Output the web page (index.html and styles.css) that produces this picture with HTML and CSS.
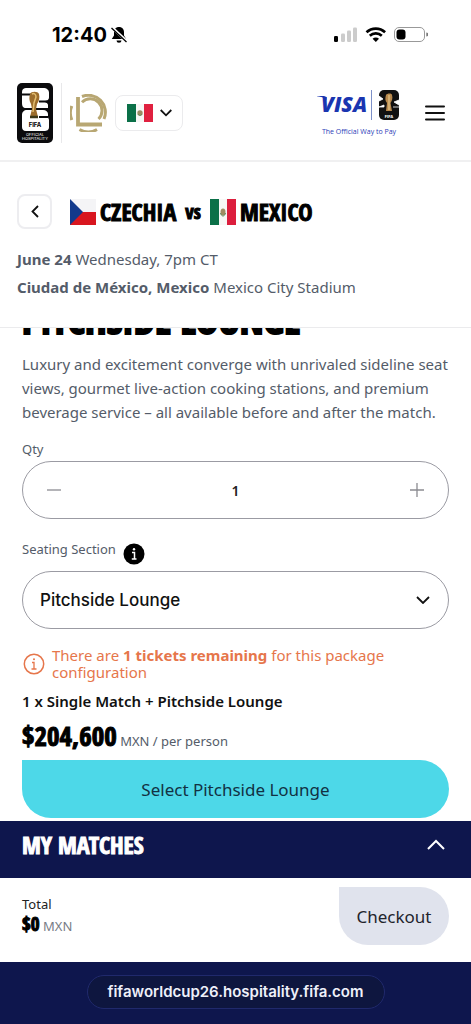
FILE: index.html
```
<!DOCTYPE html>
<html lang="en">
<head>
  <meta charset="UTF-8">
  <meta name="viewport" content="width=device-width, initial-scale=1.0">
  <title>Pitchside Lounge - Official Hospitality</title>
  <link rel="stylesheet" href="styles.css">
</head>
<body>
  <div class="status-bar">
    <div class="status-time">
      <span>12:40</span>
      <svg width="18" height="18" viewBox="0 0 18 18">
        <path d="M9 1c-3.200 0-5 2.200-5 5v3.500L1.800 13h14.400L14 9.500V6c0-2.800-1.800-5-5-5zM6.500 14.500a2.500 2.300 0 0 0 5 0z" fill="#000"/>
        <path d="M2 1.500l15 14" stroke="#fff" stroke-width="3"/>
        <path d="M1.500 2l15 14" stroke="#000" stroke-width="1.300"/>
      </svg>
    </div>
    <svg width="94" height="18" viewBox="0 0 94 18">
      <rect x="0" y="10" width="4" height="6" rx="1.300" fill="#000"/>
      <g fill="#ccc">
        <rect x="7" y="7.500" width="4" height="8.500" rx="1.300"/>
        <rect x="13" y="4.500" width="4" height="11.500" rx="1.300"/>
        <rect x="19" y="1.500" width="4" height="14.500" rx="1.300"/>
      </g>
      <g fill="none" stroke="#000" stroke-width="2.600">
        <path d="M32.500 6.300a13.500 13.500 0 0 1 18.600 0"/>
        <path d="M35.800 9.800a8.700 8.700 0 0 1 12 0"/>
      </g>
      <path d="M41.800 16l-3.200-3.200a4.600 4.600 0 0 1 6.400 0z" fill="#000"/>
      <rect x="60.500" y="1.500" width="30" height="14" rx="4.500" fill="none" stroke="#999"/>
      <rect x="62.500" y="3.500" width="9" height="10" rx="3" fill="#000"/>
      <path d="M92.300 6.500v4a2 2 0 0 0 0-4z" fill="#777"/>
    </svg>
  </div>

  <header class="nav">
    <a href="#" class="nav-logos" aria-label="Official Hospitality">
      <svg width="36" height="60" viewBox="0 0 36 60">
        <rect width="36" height="60" rx="5" fill="#0b0b0d"/>
        <path d="M5 9c0-3 2-4 4-4h17c4 0 6 2 6 5v4c0 3-2 4-5 4H5z" fill="#fff"/>
        <path d="M5 20V16c0-2 1-3 4-3h17v5c2 1 5 2 5 4v3H9c-3 0-4-2-4-5z" fill="#fff"/>
        <path d="M5 32c0-3 2-5 5-5h16c3 0 5 2 5 4v3c0 1 1 2 1 3v7c0 3-2 4-5 4H9c-3 0-4-2-4-4z" fill="#fff"/>
        <path d="M5 11.500h9M22 18.500h10M22 34h9M5 26h26" stroke="#0b0b0d" stroke-width="2"/>
        <path d="M13 11c1-3 8-3 9 0 1 4 0 7-2 10l-1 5 2 8h-8l2-8-1-5c-2-3-2-7-1-10z" fill="#9c6d2c"/>
        <path d="M15 11c2-1 4 0 4 3l-2 6-1 9" fill="none" stroke="#e2bd70" stroke-width="1.500"/>
        <path d="M13 34h8" stroke="#3d3818" stroke-width="2.500"/>
        <text x="18" y="44" class="logo-fifa" text-anchor="middle">FIFA</text>
        <text x="18" y="53" class="logo-small" text-anchor="middle">OFFICIAL</text>
        <text x="18" y="57" class="logo-small" text-anchor="middle">HOSPITALITY</text>
      </svg>
      <span class="logo-divider"></span>
      <svg width="37" height="38" viewBox="0 0 37 38" fill="none" stroke="#b8a773" stroke-width="3">
        <path d="M8 3v27.500h24" stroke-width="3.800"/>
        <path d="M1.800 12a18 18 0 0 0 0 14"/>
        <path d="M12 2.500A17 17 0 0 1 34 25"/>
        <path d="M12 8.200A11.300 11.300 0 0 1 28.500 25"/>
        <path d="M9.500 35.500a18 18 0 0 0 17.500 0"/>
      </svg>
    </a>
    <button type="button" class="btn-country" aria-label="Country: Mexico">
      <svg width="26" height="18" viewBox="0 0 26 18">
        <rect width="26" height="18" fill="#f7f7f5"/>
        <rect width="9" height="18" fill="#0b7048"/>
        <rect x="17" width="9" height="18" fill="#e0203f"/>
        <circle cx="13" cy="9" r="2.700" fill="#9c8b63"/>
        <path d="M11 10c1 2 3 2 4 0" fill="none" stroke="#5e8b5c"/>
      </svg>
      <svg width="12" height="8" viewBox="0 0 12 8" fill="none" stroke="#111" stroke-width="1.800"><path d="M.7 1L6 6.300 11.300 1"/></svg>
    </button>
    <a href="#" class="sponsor" aria-label="Visa">
      <svg width="84" height="32" viewBox="0 0 84 32">
        <path d="M0 7h7l2.500 1v3C7 8.500 4 7.700 0 7.300z" fill="#1a35b0"/>
        <text x="4" y="22.500" class="visa-text">VISA</text>
        <path d="M54.500 1v30" stroke="#7d90c8"/>
        <rect x="62" y="1" width="20" height="30" rx="5" fill="#111"/>
        <path d="M62 7l4 3-4 2zM82 11l-5 2 5 3M62 18h5v-2zM82 18h-6" fill="#fff" stroke="#fff" stroke-width=".8"/>
        <path d="M69 6c1-2 6-2 6 0 1 3 0 6-1.500 8l1.500 8h-6l1-8c-2-2-2-5-1-8z" fill="#b8894d"/>
        <path d="M72 6v15" stroke="#ead095"/>
        <text x="72" y="28.500" class="mini-fifa" text-anchor="middle">FIFA</text>
      </svg>
      <span>The Official Way to Pay</span>
    </a>
    <button type="button" class="btn-menu" aria-label="Menu">
      <svg width="20" height="16" viewBox="0 0 20 16" stroke="#111" stroke-width="2" stroke-linecap="round"><path d="M1 1.500h18M1 8h18M1 14.500h18"/></svg>
    </button>
  </header>

  <section class="match">
    <div class="match-row">
      <button type="button" class="btn-back" aria-label="Back">
        <svg width="8" height="13" viewBox="0 0 8 13" fill="none" stroke="#111" stroke-width="1.800"><path d="M7 1L1.500 6.500 7 12"/></svg>
      </button>
      <h1 class="teams">
        <svg width="26" height="26" viewBox="0 0 26 26">
          <rect width="26" height="13" fill="#f4f4f6"/>
          <rect y="13" width="26" height="13" fill="#d8161f"/>
          <path d="M0 0l13 13L0 26z" fill="#12398b"/>
        </svg>
        <span>CZECHIA</span>
        <span class="versus">vs</span>
        <svg width="26" height="26" viewBox="0 0 26 26">
          <rect width="26" height="26" fill="#f7f7f5"/>
          <rect width="9" height="26" fill="#0b7048"/>
          <rect x="17" width="9" height="26" fill="#dc1e3d"/>
          <ellipse cx="13" cy="13" rx="2.500" ry="3.500" fill="#a08c62"/>
          <path d="M10.500 14c1 4 4 4 5 0" fill="none" stroke="#5e8b5c"/>
        </svg>
        <span>MEXICO</span>
      </h1>
    </div>
    <p><b>June 24</b> Wednesday, 7pm CT</p>
    <p><b>Ciudad de México, Mexico</b> Mexico City Stadium</p>
  </section>

  <main class="package">
    <h2>PITCHSIDE LOUNGE</h2>
    <p class="description">Luxury and excitement converge with unrivaled sideline seat views, gourmet live-action cooking stations, and premium beverage service – all available before and after the match.</p>

    <label for="qty" class="field-label">Qty</label>
    <div class="field">
      <button type="button" class="btn-step" aria-label="Decrease">
        <svg width="14" height="14" viewBox="0 0 14 14" stroke="#8c8c91" stroke-width="1.300"><path d="M0 7h14"/></svg>
      </button>
      <input type="text" id="qty" name="qty" value="1" inputmode="numeric">
      <button type="button" class="btn-step" aria-label="Increase">
        <svg width="14" height="14" viewBox="0 0 14 14" stroke="#8c8c91" stroke-width="1.300"><path d="M0 7h14M7 0v14"/></svg>
      </button>
    </div>

    <div class="seating-label">
      <label for="section" class="field-label">Seating Section</label>
      <button type="button" class="btn-info" aria-label="About seating sections">
        <svg width="22" height="22" viewBox="0 0 22 22">
          <circle cx="11" cy="11" r="10.500" fill="#000"/>
          <path d="M9 9.500h2.500V16M8.800 16h4.700" fill="none" stroke="#fff" stroke-width="1.500"/>
          <circle cx="11" cy="6.300" r="1.200" fill="#fff"/>
        </svg>
      </button>
    </div>
    <div class="field">
      <select id="section" name="section">
        <option>Pitchside Lounge</option>
      </select>
      <svg class="select-arrow" width="14" height="8" viewBox="0 0 14 8" fill="none" stroke="#111" stroke-width="1.800"><path d="M1 1l6 6 6-6"/></svg>
    </div>

    <div class="notice">
      <svg width="22" height="22" viewBox="0 0 22 22" fill="none" stroke="#e6764b" stroke-width="1.500">
        <circle cx="11" cy="11" r="9.700"/>
        <path d="M9 9.500h2V16M8.500 16h5" stroke-width="1.300"/>
        <circle cx="11" cy="6.300" r="1" fill="#e6764b" stroke="none"/>
      </svg>
      <p>There are <b>1 tickets remaining</b> for this package configuration</p>
    </div>

    <p class="summary">1 x Single Match + Pitchside Lounge</p>
    <p class="price"><strong>$204,600</strong> MXN / per person</p>
    <button type="button" class="btn-select">Select Pitchside Lounge</button>
  </main>

  <section class="matches">
    <h2>MY MATCHES</h2>
    <button type="button" class="btn-expand" aria-label="Show my matches">
      <svg width="18" height="11" viewBox="0 0 18 11" fill="none" stroke="#fff" stroke-width="2"><path d="M1 10l8-8 8 8"/></svg>
    </button>
  </section>

  <section class="checkout">
    <div>
      <div class="total-label">Total</div>
      <div class="total-value"><strong>$0</strong> MXN</div>
    </div>
    <button type="button" class="btn-checkout">Checkout</button>
  </section>

  <footer class="browser-bar">
    <div class="address">fifaworldcup26.hospitality.fifa.com</div>
  </footer>
</body>
</html>
```
FILE: styles.css
```
/* Basic */
* {
  box-sizing: border-box;
}
body {
  font-family: "Noto Sans", sans-serif;
  font-size: 15px;
  color: #545c69;
  background: #fff;
  margin: 0;
  min-height: 100vh;
  display: flex;
  flex-direction: column;
}
h1, h2, p {
  margin: 0;
}
button {
  font-family: inherit;
  padding: 0;
  border: none;
  background: none;
  cursor: pointer;
}
svg {
  display: block;
  flex: none;
}

/* Display type */
.teams,
.package h2,
.price strong,
.matches h2,
.total-value strong {
  font-family: "Open Sans Condensed", "Roboto Condensed", sans-serif;
  font-weight: 700;
  -webkit-text-stroke: 1px currentColor;
}

/* Status bar */
.status-bar {
  height: 70px;
  padding: 0 43px 0 52px;
  display: flex;
  align-items: center;
  justify-content: space-between;
}
.status-time {
  display: flex;
  align-items: center;
  gap: 3px;
  font-family: Inter, sans-serif;
  font-size: 20px;
  font-weight: 700;
  color: #000;
}

/* Navigation */
.nav {
  height: 92px;
  padding: 0 26px 4px 17px;
  border-bottom: 2px solid #f0f0f1;
  display: flex;
  align-items: center;
}
.nav-logos {
  display: flex;
  align-items: center;
  gap: 8px;
}
.logo-divider {
  width: 1px;
  height: 60px;
  background: #e8e8ea;
}
.logo-fifa {
  font: 700 6px Inter, sans-serif;
  fill: #000;
}
.logo-small {
  font: 400 4px Inter, sans-serif;
  fill: #fff;
}
.btn-country {
  width: 68px;
  height: 36px;
  margin-left: 8px;
  border: 1px solid #ebebed;
  border-radius: 8px;
  display: flex;
  align-items: center;
  justify-content: center;
  gap: 7px;
}
.sponsor {
  margin-left: auto;
  display: flex;
  flex-direction: column;
  align-items: center;
  gap: 6px;
  font-family: "Open Sans", sans-serif;
  font-size: 7px;
  line-height: 10px;
  color: #2b40b8;
  text-decoration: none;
}
.visa-text {
  font: italic 800 21px "Open Sans", sans-serif;
  fill: #1a35b0;
}
.mini-fifa {
  font: 700 4px Inter, sans-serif;
  fill: #fff;
}
.btn-menu {
  margin-left: 24px;
}

/* Match */
.match {
  position: relative;
  z-index: 1;
  padding: 32px 17px 26px;
  background: #fff;
  border-bottom: 1px solid #ebebed;
}
.match-row {
  display: flex;
  align-items: center;
  gap: 18px;
  margin-bottom: 16px;
}
.btn-back {
  width: 35px;
  height: 35px;
  border: 2px solid #ededf0;
  border-radius: 8px;
  display: flex;
  align-items: center;
  justify-content: center;
}
.teams {
  display: flex;
  align-items: center;
  gap: 4px;
  font-size: 24px;
  line-height: 34px;
  color: #000;
}
.versus {
  margin: 0 5px;
  font-size: 19px;
}
.match p {
  line-height: 28px;
}

/* Package */
.package {
  padding: 0 22px 3px;
}
.package h2 {
  margin-top: -30px;
  font-size: 38px;
  line-height: 42px;
  color: #000;
  white-space: nowrap;
  -webkit-text-stroke-width: 2px;
}
.description {
  margin: 12px 0 13px;
  line-height: 24px;
}
.field-label {
  display: block;
  font-size: 13px;
  line-height: 24px;
}
.field {
  position: relative;
  height: 58px;
  padding: 0 24px;
  border: 1px solid #9b9ba3;
  border-radius: 29px;
  display: flex;
  align-items: center;
}
.field input {
  flex: 1;
  min-width: 0;
  border: none;
  background: none;
  text-align: center;
  font-family: "Noto Sans", sans-serif;
  font-size: 14px;
  font-weight: 600;
  color: #222;
}
.seating-label {
  display: flex;
  gap: 7px;
  margin-top: 18px;
  padding-bottom: 6px;
  line-height: 24px;
}
.btn-info {
  padding-top: 6px;
}
.field select {
  appearance: none;
  position: absolute;
  inset: 0;
  width: 100%;
  padding: 0 17px;
  border: none;
  border-radius: 29px;
  background: none;
  font-family: Inter, sans-serif;
  font-size: 17px;
  font-weight: 500;
  color: #111;
}
.select-arrow {
  margin-left: auto;
  margin-right: -6px;
  pointer-events: none;
}
.notice {
  display: flex;
  align-items: center;
  gap: 7px;
  margin: 18px 0 8px;
  padding-left: 1px;
  line-height: 17px;
  color: #e6764b;
}
.summary {
  font-weight: 600;
  line-height: 24px;
  color: #111;
}
.price {
  margin: 8px 0 4px;
  font-size: 13px;
  line-height: 30px;
}
.price strong {
  font-size: 27px;
  color: #000;
}
.btn-select,
.btn-checkout {
  height: 58px;
  border-radius: 0 29px 29px 29px;
  font-size: 17px;
  color: #123143;
}
.btn-select {
  display: block;
  width: 100%;
  background: #4dd8e8;
}

/* My matches */
.matches {
  height: 57px;
  padding: 0 26px 10px 22px;
  background: #0e164d;
  display: flex;
  align-items: center;
  justify-content: space-between;
}
.matches h2 {
  font-size: 24px;
  line-height: 34px;
  color: #fff;
}

/* Checkout */
.checkout {
  height: 84px;
  padding: 9px 22px;
  display: flex;
  justify-content: space-between;
}
.total-label {
  margin-top: 7px;
  font-size: 13px;
  line-height: 20px;
  color: #222;
}
.total-value {
  font-size: 13px;
  line-height: 20px;
  color: #777c86;
}
.total-value strong {
  font-size: 19px;
  color: #000;
}
.btn-checkout {
  width: 110px;
  background: #e0e3ed;
  color: #22242c;
}

/* Browser bar */
.browser-bar {
  flex: 1;
  padding: 13px 0 15px;
  background: #0e164d;
}
.address {
  width: fit-content;
  margin: 0 auto;
  padding: 0 20px;
  border: 1px solid #20296c;
  border-radius: 17px;
  background: #0e163f;
  font-family: Inter, sans-serif;
  font-size: 15px;
  font-weight: 600;
  line-height: 32px;
  color: #eef0fa;
}
```
